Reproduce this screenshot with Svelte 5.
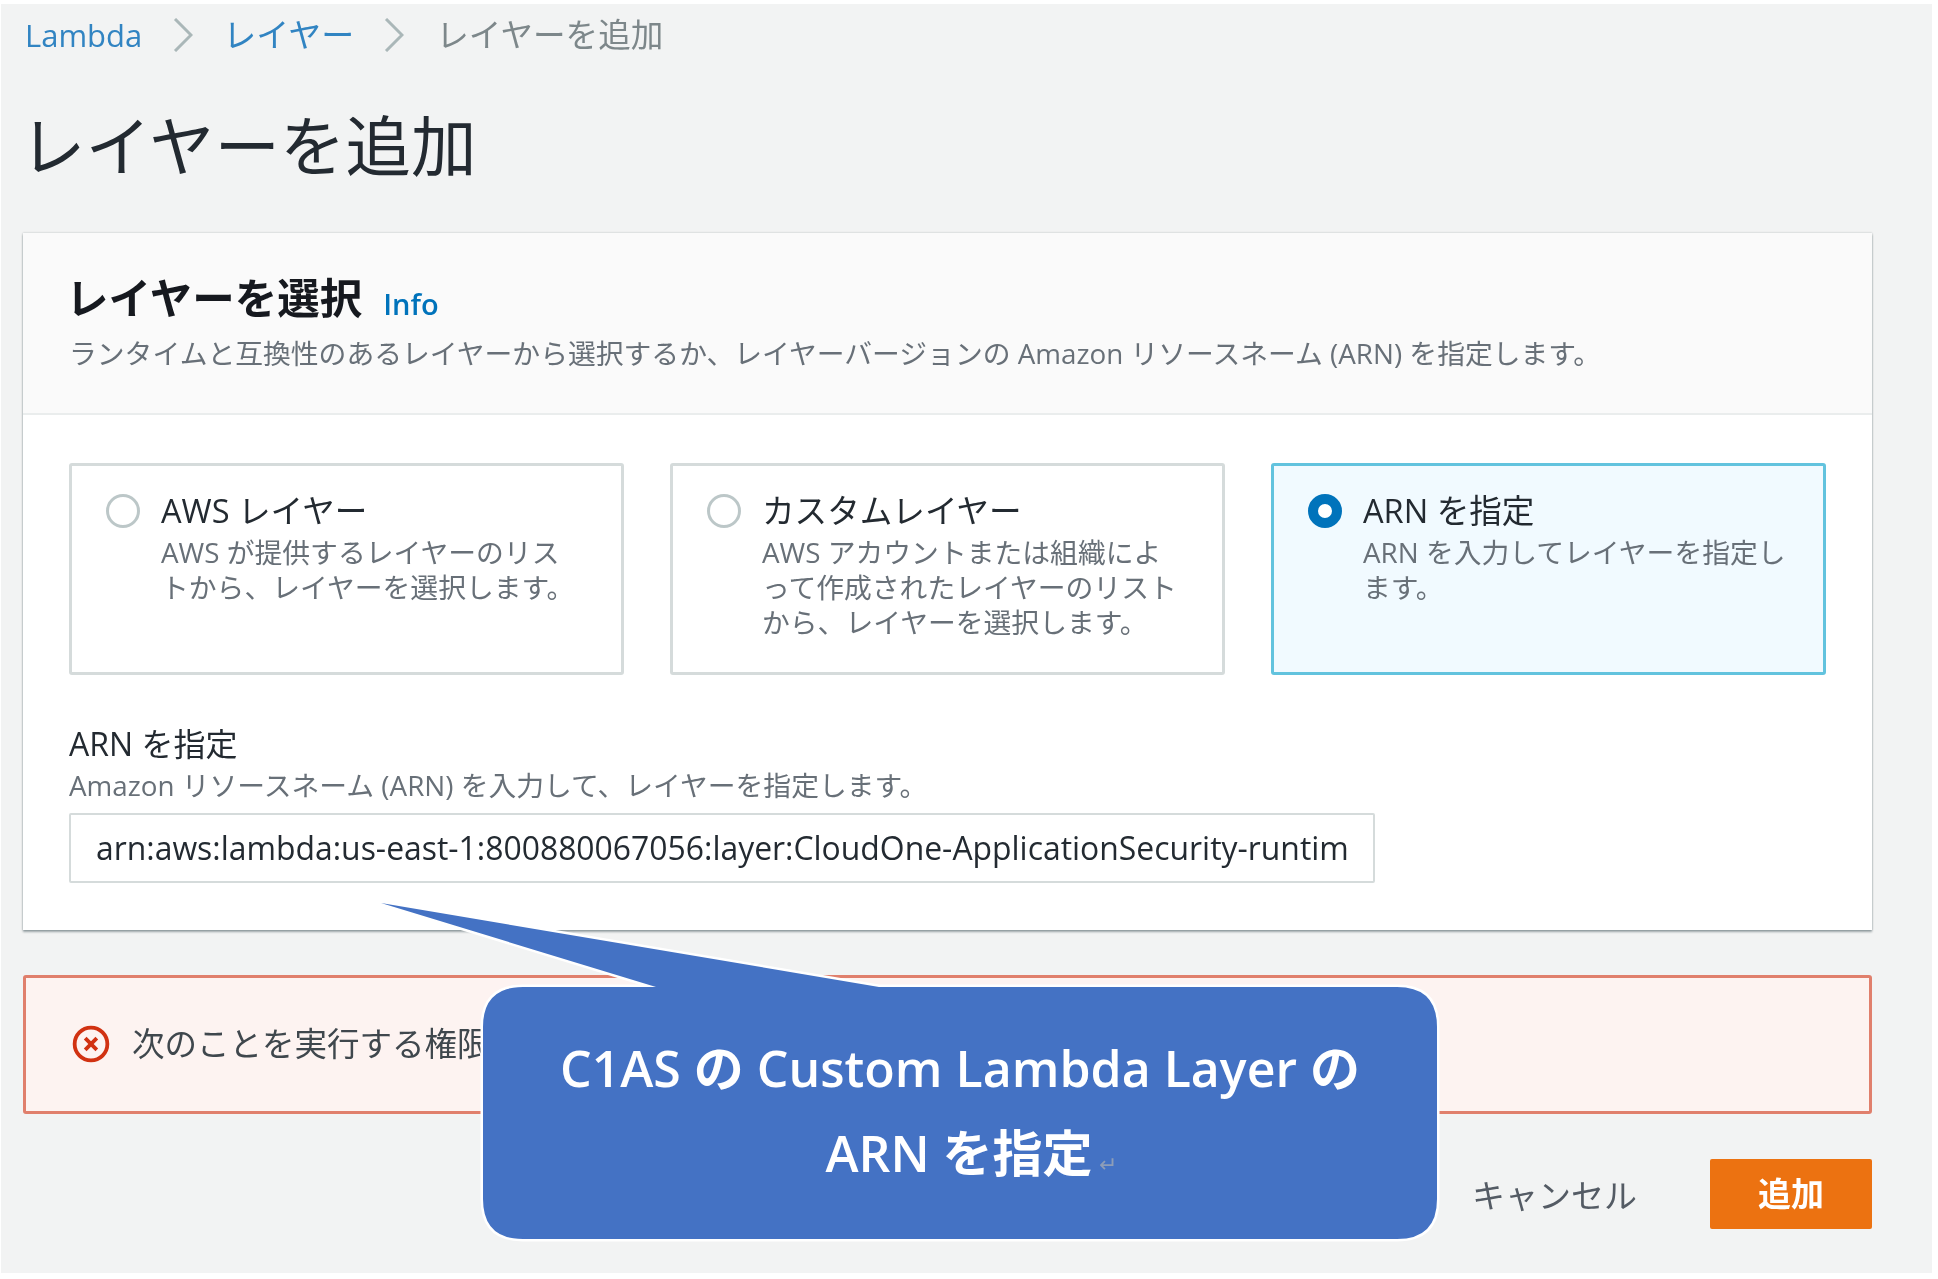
<script>
  const options = [
    { title: 'AWS レイヤー', lines: ['AWS が提供するレイヤーのリス', 'トから、レイヤーを選択します。'], selected: false },
    { title: 'カスタムレイヤー', lines: ['AWS アカウントまたは組織によ', 'って作成されたレイヤーのリスト', 'から、レイヤーを選択します。'], selected: false },
    { title: 'ARN を指定', lines: ['ARN を入力してレイヤーを指定し', 'ます。'], selected: true }
  ];
</script>

<div class="page">
  <nav class="crumbs">
    <span class="link latin">Lambda</span>
    <svg class="chev first" viewBox="0 0 20 34"><path d="M2 1 L18 17 L2 33" /></svg>
    <span class="link">レイヤー</span>
    <svg class="chev second" viewBox="0 0 20 34"><path d="M2 1 L18 17 L2 33" /></svg>
    <span class="current">レイヤーを追加</span>
  </nav>

  <h1>レイヤーを追加</h1>

  <section class="card">
    <header class="card-head">
      <div class="title-row">
        <h2>レイヤーを選択</h2>
        <span class="info">Info</span>
      </div>
      <p class="head-desc">ランタイムと互換性のあるレイヤーから選択するか、レイヤーバージョンの Amazon リソースネーム (ARN) を指定します。</p>
    </header>

    <div class="card-body">
      <div class="options">
        {#each options as o}
          <div class="option" class:selected={o.selected}>
            <span class="radio"></span>
            <div class="option-text">
              <div class="option-title">{o.title}</div>
              {#each o.lines as l}
                <div class="option-line">{l}</div>
              {/each}
            </div>
          </div>
        {/each}
      </div>

      <div class="field-label">ARN を指定</div>
      <div class="field-desc">Amazon リソースネーム (ARN) を入力して、レイヤーを指定します。</div>
      <div class="input">arn:aws:lambda:us-east-1:800880067056:layer:CloudOne-ApplicationSecurity-runtim</div>
    </div>
  </section>

  <div class="alert">
    <svg class="alert-icon" viewBox="0 0 36 36">
      <circle cx="18" cy="18" r="15.5" />
      <path d="M12.5 12.5 L23.5 23.5 M23.5 12.5 L12.5 23.5" />
    </svg>
    <span class="alert-text">次のことを実行する権限</span>
  </div>

  <div class="actions">
    <span class="cancel">キャンセル</span>
    <span class="add">追加</span>
  </div>

  <svg class="bubble" viewBox="0 0 1938 1279">
    <path d="M523 987 H656 L381 903 L879 987 H1397 Q1437 987 1437 1027 V1199 Q1437 1239 1397 1239 H523 Q483 1239 483 1199 V1027 Q483 987 523 987 Z" />
  </svg>
  <div class="bubble-text">
    <div>C1AS の Custom Lambda Layer の</div>
    <div class="line-two">ARN を指定<span class="ret">↵</span></div>
  </div>
</div>

<style>
  :global(body) {
    margin: 0;
    background: #fff;
  }
  .page {
    position: relative;
    box-sizing: border-box;
    width: 1931px;
    height: 1269px;
    margin: 4px 0 0 1px;
    padding: 11px 0 0 22px;
    background: #f2f3f3;
    color: #16191f;
    font-family: "Open Sans", "Noto Sans CJK JP", sans-serif;
    overflow: hidden;
    filter: blur(0.7px);
  }
  .crumbs {
    display: flex;
    align-items: center;
    height: 40px;
    font-size: 33px;
    line-height: 40px;
    margin-left: 2px;
  }
  .latin { font-size: 31px; }
  .link { color: #3184c2; }
  .current { color: #7d878a; font-size: 32.6px; }
  .chev {
    width: 20px;
    height: 34px;
    fill: none;
    stroke: #aab7b8;
    stroke-width: 3;
  }
  .chev.first { margin: 0 30px 0 31px; }
  .chev.second { margin: 0 32px 0 30px; }
  h1 {
    margin: 56px 0 0 -3px;
    font-size: 65.5px;
    line-height: 70px;
    font-weight: 400;
    color: #232a31;
  }
  .card {
    width: 1849px;
    margin-top: 52px;
    background: #fff;
    box-shadow: 0 2px 2px rgba(0, 28, 36, 0.35), 0 0 2px rgba(0, 28, 36, 0.25);
  }
  .card-head {
    box-sizing: border-box;
    height: 182px;
    padding: 40px 46px 0 46px;
    background: #fafafa;
    border-bottom: 2px solid #eaeded;
  }
  .title-row {
    display: flex;
    align-items: center;
    height: 50px;
    gap: 21px;
  }
  h2 {
    margin: 0 0 0 -3px;
    font-size: 42.5px;
    line-height: 50px;
    font-weight: 700;
    color: #16191f;
  }
  .info {
    margin-top: 10px;
    font-size: 29px;
    font-weight: 600;
    color: #0073bb;
  }
  .head-desc {
    margin: 10px 0 0;
    font-size: 27.8px;
    line-height: 40px;
    color: #687078;
    white-space: nowrap;
  }
  .card-body {
    padding: 48px 46px 47px;
  }
  .options {
    display: grid;
    grid-template-columns: repeat(3, 555px);
    gap: 46px;
  }
  .option {
    box-sizing: border-box;
    display: flex;
    height: 212px;
    padding: 28px 20px 0 34px;
    border: 3px solid #d5dbdb;
    border-radius: 3px;
    background: #fff;
  }
  .option.selected {
    border-color: #62c3de;
    background: #f1faff;
  }
  .radio {
    box-sizing: border-box;
    flex: none;
    width: 34px;
    height: 34px;
    border: 3px solid #bcc7c8;
    border-radius: 50%;
    background: #fff;
  }
  .selected .radio {
    border: 10px solid #0073bb;
  }
  .option-text {
    margin-left: 21px;
    white-space: nowrap;
  }
  .option-title {
    font-size: 32.6px;
    line-height: 36px;
    margin-bottom: 6px;
    margin-top: -1px;
    color: #232a31;
  }
  .option-line {
    font-size: 27.8px;
    line-height: 35px;
    color: #687078;
  }
  .field-label {
    margin-top: 49px;
    font-size: 32px;
    line-height: 40px;
    color: #232a31;
  }
  .field-desc {
    margin-top: 3px;
    font-size: 27.8px;
    line-height: 36px;
    color: #687078;
  }
  .input {
    box-sizing: border-box;
    width: 1306px;
    height: 70px;
    margin-top: 10px;
    padding: 0 25px;
    border: 2px solid #d5dbdb;
    border-radius: 2px;
    font-size: 31.9px;
    line-height: 66px;
    color: #232a31;
    white-space: nowrap;
    overflow: hidden;
  }
  .alert {
    box-sizing: border-box;
    display: flex;
    align-items: center;
    gap: 22px;
    width: 1849px;
    height: 139px;
    margin-top: 45px;
    padding: 0 0 0 46px;
    border: 3px solid #e07f6c;
    border-radius: 3px;
    background: #fdf3f1;
    font-size: 32.5px;
    color: #3f474d;
  }
  .alert-text {
    margin-top: -5px;
    white-space: nowrap;
  }
  .alert-icon {
    flex: none;
    width: 38px;
    height: 38px;
    margin-top: -2px;
    fill: none;
    stroke: #d13212;
    stroke-width: 3.6;
  }
  .actions {
    display: flex;
    justify-content: flex-end;
    align-items: center;
    width: 1849px;
    margin-top: 45px;
    font-size: 33px;
  }
  .cancel {
    margin-right: 73px;
    color: #545b64;
  }
  .add {
    box-sizing: border-box;
    width: 162px;
    height: 70px;
    line-height: 70px;
    text-align: center;
    background: #ec7211;
    color: #fff;
    font-weight: 700;
    border-radius: 2px;
  }
  .bubble {
    position: absolute;
    left: -1px;
    top: -4px;
    width: 1938px;
    height: 1279px;
    pointer-events: none;
  }
  .bubble path {
    fill: #4472c4;
    stroke: #fff;
    stroke-width: 5;
    stroke-linejoin: round;
    paint-order: stroke;
  }
  .bubble-text {
    position: absolute;
    left: 482px;
    top: 983px;
    display: flex;
    flex-direction: column;
    align-items: center;
    width: 954px;
    height: 252px;
    padding-top: 39px;
    box-sizing: border-box;
    font-size: 50px;
    line-height: 85px;
    font-weight: 600;
    color: #fff;
    white-space: nowrap;
  }
  .line-two {
    padding-left: 22px;
  }
  .ret {
    margin-left: 6px;
    font-size: 22px;
    font-weight: 400;
    color: #8d9db8;
  }
</style>
